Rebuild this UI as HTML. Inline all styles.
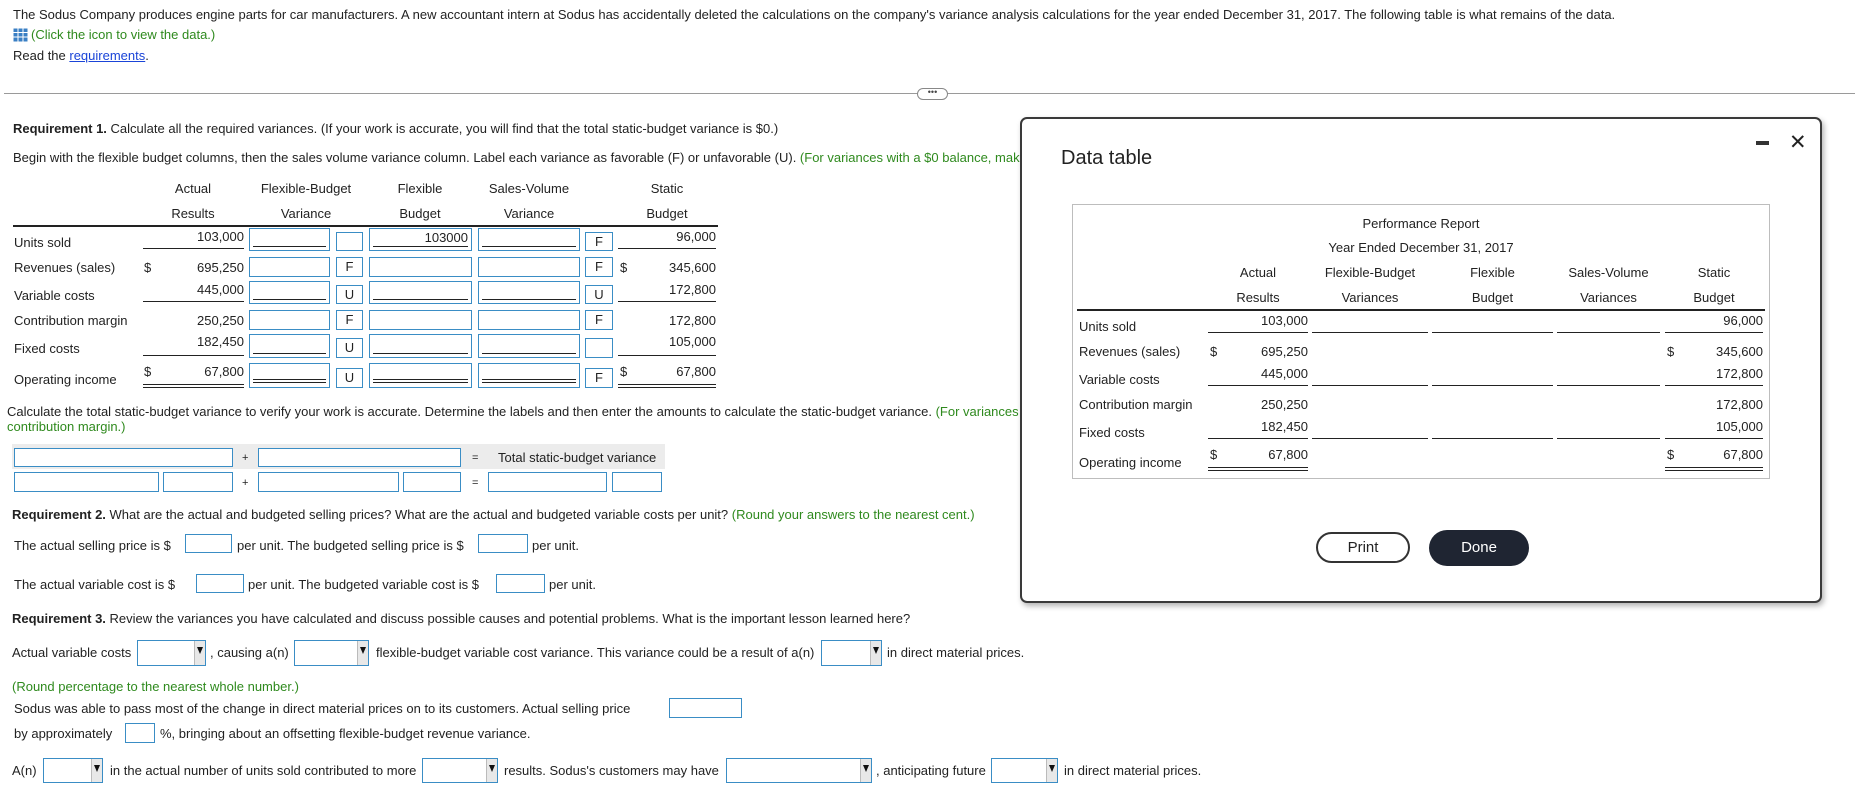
<!DOCTYPE html>
<html><head><meta charset="utf-8"><style>
body{margin:0;width:1855px;height:795px;background:#fff;position:relative;overflow:hidden;font-family:"Liberation Sans",Arial,sans-serif;font-size:13px;color:#222}
.t{position:absolute;white-space:nowrap;line-height:16px}
.g{color:#2f8a1e}
.b{position:absolute;border:1px solid #3a8dc5;box-sizing:border-box;background:#fff}
.s{position:absolute;border:1px solid #3a8dc5;box-sizing:border-box;background:#fff;text-align:center;line-height:18px;font-size:13px}
.r{text-align:right}
.c{text-align:center}
.ul{position:absolute;height:0;border-top:1px solid #222}
.dl{position:absolute;height:2px;border-top:1px solid #222;border-bottom:1px solid #222}
.in{position:absolute;left:3px;right:3px;bottom:3px;border-top:1px solid #222}
.dd{position:absolute;border:1px solid #3a8dc5;box-sizing:border-box;background:#fff}
.dd:after{content:"";position:absolute;right:0;top:0;bottom:0;width:10px;background:#e8e8e8;border-left:1px solid #bbb}
.dd:before{content:"";position:absolute;right:2px;top:6px;border-left:3px solid transparent;border-right:3px solid transparent;border-top:7px solid #111;z-index:2}
</style></head><body>
<div class="t" style="left:13px;top:7px">The Sodus Company produces engine parts for car manufacturers. A new accountant intern at Sodus has accidentally deleted the calculations on the company's variance analysis calculations for the year ended December 31, 2017. The following table is what remains of the data.</div>
<svg style="position:absolute;left:13px;top:28px" width="15" height="14"><rect x="0.5" y="0.5" width="14" height="13" fill="#3a7fc4"/><g stroke="#fff" stroke-width="1"><line x1="0" y1="4.5" x2="15" y2="4.5"/><line x1="0" y1="9" x2="15" y2="9"/><line x1="5" y1="0" x2="5" y2="14"/><line x1="10" y1="0" x2="10" y2="14"/></g></svg>
<div class="t g" style="left:31px;top:27px">(Click the icon to view the data.)</div>
<div class="t" style="left:13px;top:48px">Read the <span style="color:#1a44d8;text-decoration:underline">requirements</span>.</div>
<div style="position:absolute;left:4px;right:0;top:93px;border-top:1px solid #9a9a9a"></div>
<div style="position:absolute;left:917px;top:88px;width:29px;height:10px;border:1px solid #888;border-radius:6px;background:#fff;font-size:9px;line-height:7px;text-align:center;color:#444">•••</div>

<div class="t" style="left:13px;top:121px"><b>Requirement 1.</b> Calculate all the required variances. (If your work is accurate, you will find that the total static-budget variance is $0.)</div>
<div class="t" style="left:13px;top:150px">Begin with the flexible budget columns, then the sales volume variance column. Label each variance as favorable (F) or unfavorable (U). <span class="g">(For variances with a $0 balance, make</span></div>

<div class="t c" style="left:153px;width:80px;top:181px">Actual</div>
<div class="t c" style="left:153px;width:80px;top:206px">Results</div>
<div class="t c" style="left:256px;width:100px;top:181px">Flexible-Budget</div>
<div class="t c" style="left:256px;width:100px;top:206px">Variance</div>
<div class="t c" style="left:380px;width:80px;top:181px">Flexible</div>
<div class="t c" style="left:380px;width:80px;top:206px">Budget</div>
<div class="t c" style="left:479px;width:100px;top:181px">Sales-Volume</div>
<div class="t c" style="left:479px;width:100px;top:206px">Variance</div>
<div class="t c" style="left:627px;width:80px;top:181px">Static</div>
<div class="t c" style="left:627px;width:80px;top:206px">Budget</div>
<div class="ul" style="left:13px;width:705px;top:225px;border-top-width:2px"></div>

<div class="t" style="left:14px;top:235px">Units sold</div>
<div class="t" style="left:14px;top:260px">Revenues (sales)</div>
<div class="t" style="left:14px;top:288px">Variable costs</div>
<div class="t" style="left:14px;top:313px">Contribution margin</div>
<div class="t" style="left:14px;top:341px">Fixed costs</div>
<div class="t" style="left:14px;top:372px">Operating income</div>
<div class="t" style="left:144px;top:260px">$</div>
<div class="t" style="left:144px;top:364px">$</div>
<div class="t" style="left:620px;top:260px">$</div>
<div class="t" style="left:620px;top:364px">$</div>
<div class="t r" style="left:160px;width:84px;top:229px">103,000</div>
<div class="t r" style="left:160px;width:84px;top:260px">695,250</div>
<div class="t r" style="left:160px;width:84px;top:282px">445,000</div>
<div class="t r" style="left:160px;width:84px;top:313px">250,250</div>
<div class="t r" style="left:160px;width:84px;top:334px">182,450</div>
<div class="t r" style="left:160px;width:84px;top:364px">67,800</div>
<div class="t r" style="left:630px;width:86px;top:229px">96,000</div>
<div class="t r" style="left:630px;width:86px;top:260px">345,600</div>
<div class="t r" style="left:630px;width:86px;top:282px">172,800</div>
<div class="t r" style="left:630px;width:86px;top:313px">172,800</div>
<div class="t r" style="left:630px;width:86px;top:334px">105,000</div>
<div class="t r" style="left:630px;width:86px;top:364px">67,800</div>
<div class="ul" style="left:143px;width:101px;top:248px"></div>
<div class="ul" style="left:143px;width:101px;top:301px"></div>
<div class="ul" style="left:143px;width:101px;top:355px"></div>
<div class="dl" style="left:143px;width:101px;top:384px"></div>
<div class="ul" style="left:618px;width:98px;top:248px"></div>
<div class="ul" style="left:618px;width:98px;top:301px"></div>
<div class="ul" style="left:618px;width:98px;top:355px"></div>
<div class="dl" style="left:618px;width:98px;top:384px"></div>

<div class="b" style="left:249px;top:228px;width:81px;height:23px"><div class="in"></div></div>
<div class="s" style="left:336px;top:232px;width:27px;height:19px"></div>
<div class="b" style="left:369px;top:228px;width:103px;height:23px"><div class="in"></div><div class="t r" style="right:3px;top:1px">103000</div></div>
<div class="b" style="left:478px;top:228px;width:102px;height:23px"><div class="in"></div></div>
<div class="s" style="left:585px;top:232px;width:28px;height:19px">F</div>
<div class="b" style="left:249px;top:257px;width:81px;height:20px"></div>
<div class="s" style="left:336px;top:257px;width:27px;height:20px">F</div>
<div class="b" style="left:369px;top:257px;width:103px;height:20px"></div>
<div class="b" style="left:478px;top:257px;width:102px;height:20px"></div>
<div class="s" style="left:585px;top:257px;width:28px;height:20px">F</div>
<div class="b" style="left:249px;top:281px;width:81px;height:23px"><div class="in"></div></div>
<div class="s" style="left:336px;top:285px;width:27px;height:19px">U</div>
<div class="b" style="left:369px;top:281px;width:103px;height:23px"><div class="in"></div></div>
<div class="b" style="left:478px;top:281px;width:102px;height:23px"><div class="in"></div></div>
<div class="s" style="left:585px;top:285px;width:28px;height:19px">U</div>
<div class="b" style="left:249px;top:310px;width:81px;height:20px"></div>
<div class="s" style="left:336px;top:310px;width:27px;height:20px">F</div>
<div class="b" style="left:369px;top:310px;width:103px;height:20px"></div>
<div class="b" style="left:478px;top:310px;width:102px;height:20px"></div>
<div class="s" style="left:585px;top:310px;width:28px;height:20px">F</div>
<div class="b" style="left:249px;top:334px;width:81px;height:24px"><div class="in"></div></div>
<div class="s" style="left:336px;top:338px;width:27px;height:20px">U</div>
<div class="b" style="left:369px;top:334px;width:103px;height:24px"><div class="in"></div></div>
<div class="b" style="left:478px;top:334px;width:102px;height:24px"><div class="in"></div></div>
<div class="s" style="left:585px;top:338px;width:28px;height:20px"></div>
<div class="b" style="left:249px;top:363px;width:81px;height:25px"><div class="in" style="bottom:4px;height:2px;border-bottom:1px solid #222"></div></div>
<div class="s" style="left:336px;top:368px;width:27px;height:20px">U</div>
<div class="b" style="left:369px;top:363px;width:103px;height:25px"><div class="in" style="bottom:4px;height:2px;border-bottom:1px solid #222"></div></div>
<div class="b" style="left:478px;top:363px;width:102px;height:25px"><div class="in" style="bottom:4px;height:2px;border-bottom:1px solid #222"></div></div>
<div class="s" style="left:585px;top:368px;width:28px;height:20px">F</div>

<div class="t" style="left:7px;top:404px">Calculate the total static-budget variance to verify your work is accurate. Determine the labels and then enter the amounts to calculate the static-budget variance. <span class="g">(For variances</span></div>
<div class="t g" style="left:7px;top:419px">contribution margin.)</div>

<div style="position:absolute;left:12px;top:444px;width:653px;height:25px;background:#ececec"></div>
<div class="b" style="left:14px;top:448px;width:219px;height:19px"></div>
<div class="t" style="left:242px;top:450px;font-size:11px">+</div>
<div class="b" style="left:258px;top:448px;width:203px;height:19px"></div>
<div class="t" style="left:472px;top:450px;font-size:11px">=</div>
<div class="t" style="left:498px;top:450px">Total static-budget variance</div>
<div class="b" style="left:14px;top:472px;width:145px;height:20px"></div>
<div class="b" style="left:163px;top:472px;width:70px;height:20px"></div>
<div class="t" style="left:242px;top:475px;font-size:11px">+</div>
<div class="b" style="left:258px;top:472px;width:141px;height:20px"></div>
<div class="b" style="left:403px;top:472px;width:58px;height:20px"></div>
<div class="t" style="left:472px;top:475px;font-size:11px">=</div>
<div class="b" style="left:488px;top:472px;width:119px;height:20px"></div>
<div class="b" style="left:612px;top:472px;width:50px;height:20px"></div>

<div class="t" style="left:12px;top:507px"><b>Requirement 2.</b> What are the actual and budgeted selling prices? What are the actual and budgeted variable costs per unit? <span class="g">(Round your answers to the nearest cent.)</span></div>
<div class="t" style="left:14px;top:538px">The actual selling price is $</div>
<div class="b" style="left:185px;top:534px;width:47px;height:19px"></div>
<div class="t" style="left:237px;top:538px">per unit. The budgeted selling price is $</div>
<div class="b" style="left:478px;top:534px;width:50px;height:19px"></div>
<div class="t" style="left:532px;top:538px">per unit.</div>
<div class="t" style="left:14px;top:577px">The actual variable cost is $</div>
<div class="b" style="left:196px;top:574px;width:48px;height:19px"></div>
<div class="t" style="left:248px;top:577px">per unit. The budgeted variable cost is $</div>
<div class="b" style="left:496px;top:574px;width:49px;height:19px"></div>
<div class="t" style="left:549px;top:577px">per unit.</div>

<div class="t" style="left:12px;top:611px"><b>Requirement 3.</b> Review the variances you have calculated and discuss possible causes and potential problems. What is the important lesson learned here?</div>
<div class="t" style="left:12px;top:645px">Actual variable costs</div>
<div class="dd" style="left:137px;top:640px;width:69px;height:26px"></div>
<div class="t" style="left:210px;top:645px">, causing a(n)</div>
<div class="dd" style="left:294px;top:640px;width:75px;height:26px"></div>
<div class="t" style="left:376px;top:645px">flexible-budget variable cost variance. This variance could be a result of a(n)</div>
<div class="dd" style="left:821px;top:640px;width:61px;height:26px"></div>
<div class="t" style="left:887px;top:645px">in direct material prices.</div>
<div class="t g" style="left:12px;top:679px">(Round percentage to the nearest whole number.)</div>
<div class="t" style="left:14px;top:701px">Sodus was able to pass most of the change in direct material prices on to its customers. Actual selling price</div>
<div class="b" style="left:669px;top:698px;width:73px;height:20px"></div>
<div class="t" style="left:14px;top:726px">by approximately</div>
<div class="b" style="left:125px;top:723px;width:30px;height:20px"></div>
<div class="t" style="left:160px;top:726px">%, bringing about an offsetting flexible-budget revenue variance.</div>
<div class="t" style="left:12px;top:763px">A(n)</div>
<div class="dd" style="left:43px;top:758px;width:60px;height:25px"></div>
<div class="t" style="left:110px;top:763px">in the actual number of units sold contributed to more</div>
<div class="dd" style="left:422px;top:758px;width:76px;height:25px"></div>
<div class="t" style="left:504px;top:763px">results. Sodus's customers may have</div>
<div class="dd" style="left:726px;top:758px;width:146px;height:25px"></div>
<div class="t" style="left:876px;top:763px">, anticipating future</div>
<div class="dd" style="left:991px;top:758px;width:67px;height:25px"></div>
<div class="t" style="left:1064px;top:763px">in direct material prices.</div>

<div style="position:absolute;left:1020px;top:117px;width:802px;height:486px;box-sizing:border-box;border:2px solid #3a3a3a;border-radius:7px;background:#fff;box-shadow:2px 3px 6px rgba(0,0,0,.3)"></div>
<div class="t" style="left:1061px;top:146px;font-size:20px;line-height:24px">Data table</div>
<div style="position:absolute;left:1756px;top:141px;width:13px;height:4px;background:#333"></div>
<div class="t" style="left:1789px;top:132px;font-size:21px;line-height:22px">✕</div>
<div style="position:absolute;left:1072px;top:204px;width:698px;height:275px;box-sizing:border-box;border:1px solid #bdbdbd"></div>
<div class="t c" style="left:1321px;width:200px;top:216px">Performance Report</div>
<div class="t c" style="left:1321px;width:200px;top:240px">Year Ended December 31, 2017</div>
<div class="t c" style="left:1208px;width:100px;top:265px">Actual</div>
<div class="t c" style="left:1208px;width:100px;top:290px">Results</div>
<div class="t c" style="left:1312px;width:116px;top:265px">Flexible-Budget</div>
<div class="t c" style="left:1312px;width:116px;top:290px">Variances</div>
<div class="t c" style="left:1432px;width:121px;top:265px">Flexible</div>
<div class="t c" style="left:1432px;width:121px;top:290px">Budget</div>
<div class="t c" style="left:1557px;width:103px;top:265px">Sales-Volume</div>
<div class="t c" style="left:1557px;width:103px;top:290px">Variances</div>
<div class="t c" style="left:1665px;width:98px;top:265px">Static</div>
<div class="t c" style="left:1665px;width:98px;top:290px">Budget</div>
<div class="ul" style="left:1077px;width:688px;top:309px;border-top-width:2px"></div>
<div class="t" style="left:1079px;top:319px">Units sold</div>
<div class="t" style="left:1079px;top:344px">Revenues (sales)</div>
<div class="t" style="left:1079px;top:372px">Variable costs</div>
<div class="t" style="left:1079px;top:397px">Contribution margin</div>
<div class="t" style="left:1079px;top:425px">Fixed costs</div>
<div class="t" style="left:1079px;top:455px">Operating income</div>
<div class="t" style="left:1210px;top:344px">$</div>
<div class="t" style="left:1210px;top:447px">$</div>
<div class="t" style="left:1667px;top:344px">$</div>
<div class="t" style="left:1667px;top:447px">$</div>
<div class="t r" style="left:1220px;width:88px;top:313px">103,000</div>
<div class="t r" style="left:1220px;width:88px;top:344px">695,250</div>
<div class="t r" style="left:1220px;width:88px;top:366px">445,000</div>
<div class="t r" style="left:1220px;width:88px;top:397px">250,250</div>
<div class="t r" style="left:1220px;width:88px;top:419px">182,450</div>
<div class="t r" style="left:1220px;width:88px;top:447px">67,800</div>
<div class="t r" style="left:1675px;width:88px;top:313px">96,000</div>
<div class="t r" style="left:1675px;width:88px;top:344px">345,600</div>
<div class="t r" style="left:1675px;width:88px;top:366px">172,800</div>
<div class="t r" style="left:1675px;width:88px;top:397px">172,800</div>
<div class="t r" style="left:1675px;width:88px;top:419px">105,000</div>
<div class="t r" style="left:1675px;width:88px;top:447px">67,800</div>
<div class="ul" style="left:1208px;width:100px;top:332px"></div>
<div class="ul" style="left:1312px;width:116px;top:332px"></div>
<div class="ul" style="left:1432px;width:121px;top:332px"></div>
<div class="ul" style="left:1557px;width:103px;top:332px"></div>
<div class="ul" style="left:1665px;width:98px;top:332px"></div>
<div class="ul" style="left:1208px;width:100px;top:385px"></div>
<div class="ul" style="left:1312px;width:116px;top:385px"></div>
<div class="ul" style="left:1432px;width:121px;top:385px"></div>
<div class="ul" style="left:1557px;width:103px;top:385px"></div>
<div class="ul" style="left:1665px;width:98px;top:385px"></div>
<div class="ul" style="left:1208px;width:100px;top:438px"></div>
<div class="ul" style="left:1312px;width:116px;top:438px"></div>
<div class="ul" style="left:1432px;width:121px;top:438px"></div>
<div class="ul" style="left:1557px;width:103px;top:438px"></div>
<div class="ul" style="left:1665px;width:98px;top:438px"></div>
<div class="dl" style="left:1208px;width:100px;top:467px"></div>
<div class="dl" style="left:1665px;width:98px;top:467px"></div>
<div style="position:absolute;left:1316px;top:532px;width:94px;height:31px;box-sizing:border-box;border:2px solid #333;border-radius:16px;text-align:center;line-height:27px;font-size:15px">Print</div>
<div style="position:absolute;left:1429px;top:530px;width:100px;height:36px;background:#1f2532;border-radius:18px;text-align:center;line-height:36px;font-size:15px;color:#fff">Done</div>
</body></html>
